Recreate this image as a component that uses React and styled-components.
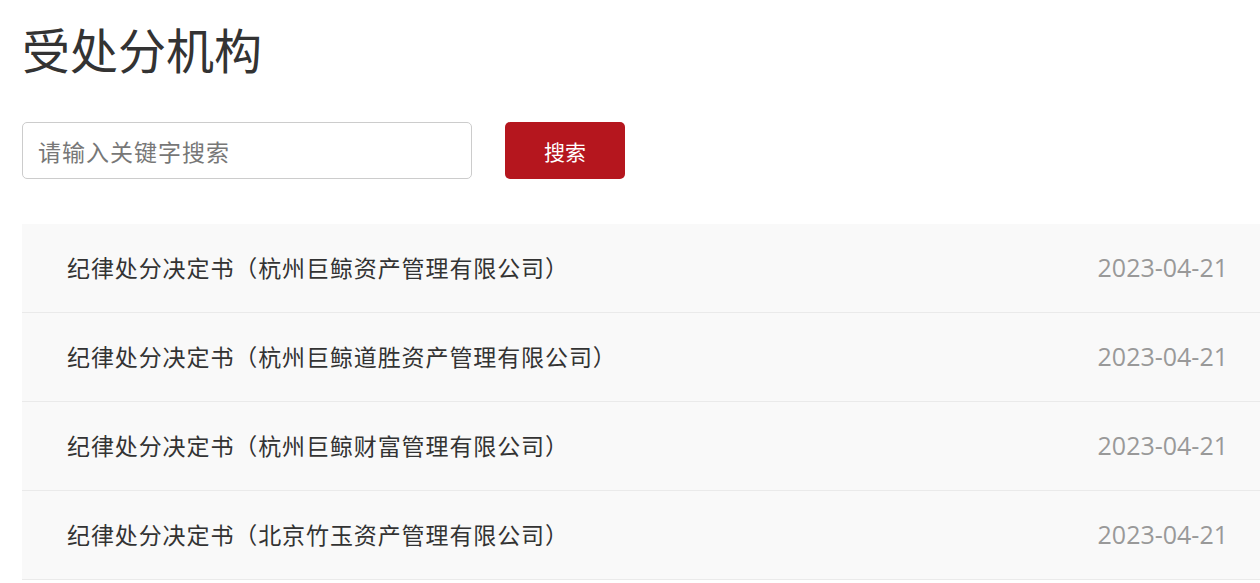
import React from "react";
import styled, { createGlobalStyle } from "styled-components";

const Global = createGlobalStyle`
  html, body { margin: 0; padding: 0; background: #fff; }
  body { font-family: "Microsoft YaHei", "Noto Sans CJK SC", sans-serif; color: #333; overflow: hidden; }
  * { box-sizing: border-box; }
`;

const Page = styled.div`
  padding: 0 0 0 22px;
  width: 1260px;
`;

const Title = styled.h1`
  margin: 0;
  padding-top: 16px;
  height: 122px;
  font-size: 48px;
  font-weight: 400;
  line-height: 64px;
  color: #333;
`;

const SearchBar = styled.form`
  display: flex;
  align-items: center;
  gap: 33px;
  height: 57px;
  margin-bottom: 45px;
`;

const Input = styled.input`
  width: 450px;
  height: 57px;
  border: 1px solid #ccc;
  border-radius: 5px;
  padding: 0 15px;
  font-family: "Noto Sans CJK SC", sans-serif;
  font-size: 23px;
  letter-spacing: 1px;
  color: #333;
  outline: none;
  &::placeholder { color: #777; }
`;

const Button = styled.button`
  width: 120px;
  height: 57px;
  border: none;
  border-radius: 5px;
  background: #b5161e;
  color: #fff;
  font-family: "Noto Sans CJK SC", sans-serif;
  font-size: 21px;
  cursor: pointer;
`;

const List = styled.ul`
  list-style: none;
  margin: 0;
  padding: 0;
`;

const Row = styled.li`
  display: flex;
  align-items: center;
  justify-content: space-between;
  height: 89px;
  padding: 0 32px 3px 45px;
  background: #f9f9f9;
  border-bottom: 1px solid #eaeaea;
`;

const RowTitle = styled.span`
  font-family: "Noto Sans CJK SC", sans-serif;
  font-size: 23px;
  letter-spacing: 0.9px;
  color: #333;
`;

const RowDate = styled.span`
  font-family: "Open Sans", "Noto Sans", sans-serif;
  font-size: 25px;
  color: #999;
`;

const items = [
  "纪律处分决定书（杭州巨鲸资产管理有限公司）",
  "纪律处分决定书（杭州巨鲸道胜资产管理有限公司）",
  "纪律处分决定书（杭州巨鲸财富管理有限公司）",
  "纪律处分决定书（北京竹玉资产管理有限公司）",
];

export default function App() {
  return (
    <>
      <Global />
      <Page>
        <Title>受处分机构</Title>
        <SearchBar onSubmit={(e) => e.preventDefault()}>
          <Input placeholder="请输入关键字搜索" />
          <Button type="submit">搜索</Button>
        </SearchBar>
        <List>
          {items.map((t, i) => (
            <Row key={i}>
              <RowTitle>{t}</RowTitle>
              <RowDate>2023-04-21</RowDate>
            </Row>
          ))}
        </List>
      </Page>
    </>
  );
}
